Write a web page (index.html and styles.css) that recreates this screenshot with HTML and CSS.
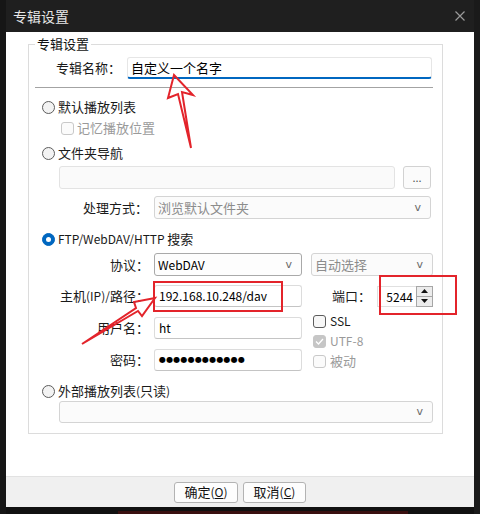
FILE: index.html
```html
<!DOCTYPE html>
<html lang="zh-CN">
<head>
<meta charset="utf-8">
<title>专辑设置</title>
<link rel="stylesheet" href="styles.css">
</head>
<body>
<div class="screen">
  <div class="side-strip"></div>
  <div class="dialog">
    <div class="titlebar">
      <span class="title">专辑设置</span>
      <svg class="close" width="10" height="10" viewBox="0 0 10 10"><path d="M0.5 0.5 L9.5 9.5 M9.5 0.5 L0.5 9.5" stroke="#9a9a9a" stroke-width="1.2" fill="none"/></svg>
    </div>
    <div class="content">
      <div class="group">
        <span class="legend">专辑设置</span>

        <div class="row name-row">
          <span class="label name-label">专辑名称：</span>
          <div class="field focused name-field">自定义一个名字</div>
        </div>

        <div class="sep"></div>

        <div class="opt opt-default">
          <span class="rb"></span><span>默认播放列表</span>
        </div>
        <div class="opt opt-remember">
          <span class="cb dis"></span><span class="muted">记忆播放位置</span>
        </div>
        <div class="opt opt-folder">
          <span class="rb"></span><span>文件夹导航</span>
        </div>

        <div class="row path-row">
          <div class="field dis path-field"></div>
          <div class="dots-btn">...</div>
        </div>

        <div class="row mode-row">
          <span class="label mode-label">处理方式：</span>
          <div class="select dis mode-select"><span>浏览默认文件夹</span><span class="chev">v</span></div>
        </div>

        <div class="opt opt-ftp">
          <span class="rb on"></span><span><span class="lat">FTP/WebDAV/HTTP </span>搜索</span>
        </div>

        <div class="row proto-row">
          <span class="label col-label">协议：</span>
          <div class="select proto-select"><span class="lat">WebDAV</span><span class="chev">v</span></div>
          <div class="select dis auto-select"><span>自动选择</span><span class="chev">v</span></div>
        </div>

        <div class="ftp">
          <div class="ftp-left">
            <div class="frow">
              <span class="label col-label">主机<span class="lat">(IP)/</span>路径：</span>
              <div class="field ftp-field"><span class="lat">192.168.10.248/dav</span></div>
            </div>
            <div class="frow">
              <span class="label col-label">用户名：</span>
              <div class="field ftp-field"><span class="lat">ht</span></div>
            </div>
            <div class="frow">
              <span class="label col-label">密码：</span>
              <div class="field ftp-field"><span class="pw">●●●●●●●●●●●●</span></div>
            </div>
          </div>
          <div class="ftp-right">
            <div class="port-row">
              <span class="label port-label">端口：</span>
              <div class="spin">
                <div class="spin-val lat">5244</div>
                <div class="spin-btns">
                  <div class="spin-btn"><svg width="7" height="4" viewBox="0 0 7 4"><path d="M3.5 0 L7 4 L0 4 Z" fill="#111"/></svg></div>
                  <div class="spin-btn"><svg width="7" height="4" viewBox="0 0 7 4"><path d="M0 0 L7 0 L3.5 4 Z" fill="#111"/></svg></div>
                </div>
              </div>
            </div>
            <div class="copt copt-first"><span class="cb"></span><span class="lat">SSL</span></div>
            <div class="copt"><span class="cb dis-on"><svg width="9" height="7" viewBox="0 0 9 7"><path d="M1 3.5 L3.5 6 L8 1" stroke="#fff" stroke-width="1.3" fill="none"/></svg></span><span class="muted lat">UTF-8</span></div>
            <div class="copt"><span class="cb dis"></span><span class="muted">被动</span></div>
          </div>
        </div>

        <div class="opt opt-ext">
          <span class="rb"></span><span>外部播放列表<span class="lat">(</span>只读<span class="lat">)</span></span>
        </div>
        <div class="row ext-row">
          <div class="select dis ext-select"><span></span><span class="chev">v</span></div>
        </div>
      </div>
    </div>
    <div class="footer">
      <div class="btn btn-ok">确定<span class="lat">(<u>O</u>)</span></div>
      <div class="btn btn-cancel">取消<span class="lat">(<u>C</u>)</span></div>
    </div>
    <div class="below"><div class="below-bar"></div></div>
  </div>
  <div class="side-strip right"></div>
</div>

<svg class="annot" width="480" height="514" viewBox="0 0 480 514">
  <rect x="154" y="282" width="128" height="29" fill="none" stroke="#e3242b" stroke-width="2"/>
  <rect x="380" y="276" width="76" height="38" fill="none" stroke="#e3242b" stroke-width="2"/>
  <polygon points="174,75 193,95 182,92 191,148 178,94 168,98" fill="none" stroke="#e3242b" stroke-width="2" stroke-linejoin="miter"/>
  <polygon points="155,298 134,302 136,308 82,344 138,311 142,316" fill="none" stroke="#e3242b" stroke-width="2" stroke-linejoin="miter"/>
</svg>
</body>
</html>
```

FILE: styles.css
```css
html, body {
  margin: 0;
  padding: 0;
}

body {
  width: 480px;
  height: 514px;
  overflow: hidden;
  position: relative;
  background: #121212;
  font-family: "Noto Sans CJK SC", "Noto Sans", sans-serif;
  font-size: 13px;
  color: #1a1a1a;
}

.lat {
  font-size: 12px;
}

.screen {
  display: flex;
  height: 514px;
}

.side-strip {
  width: 6px;
  background: #161616;
}

.side-strip.right {
  background: #1a1a1a;
}

.dialog {
  width: 468px;
  display: flex;
  flex-direction: column;
}

.titlebar {
  height: 32px;
  box-sizing: border-box;
  background: #1f1f1f;
  display: flex;
  align-items: center;
  justify-content: space-between;
  padding: 0 9px 0 7px;
  color: #e6e6e6;
  font-size: 14px;
  line-height: 18px;
}

.content {
  height: 444px;
  box-sizing: border-box;
  background: #ffffff;
  padding: 12px 0 0 22px;
}

.group {
  position: relative;
  width: 415px;
  height: 390px;
  box-sizing: border-box;
  border: 1px solid #dcdcdc;
}

.legend {
  position: absolute;
  top: -10px;
  left: 6px;
  padding: 0 2px;
  background: #fff;
  line-height: 18px;
  color: #111;
}

.row {
  display: flex;
  align-items: center;
}

.label {
  line-height: 18px;
  white-space: nowrap;
}

.field {
  height: 22px;
  box-sizing: border-box;
  border: 1px solid #dcdcdc;
  border-bottom-color: #c4c4c4;
  border-radius: 3px;
  background: #fff;
  padding: 0 4px;
  display: flex;
  align-items: center;
  line-height: 18px;
  color: #000;
  white-space: nowrap;
}

.field.focused {
  border-color: #e6e6e6;
  border-bottom: 2px solid #0067c0;
  padding-top: 1px;
  padding-left: 3px;
}

.field.dis {
  background: #fafafa;
  border-color: #e3e3e3;
}

.select {
  height: 23px;
  box-sizing: border-box;
  border: 1px solid #a9a9a9;
  border-radius: 3px;
  background: #fdfdfd;
  display: flex;
  align-items: center;
  justify-content: space-between;
  padding: 0 9px 0 3px;
  line-height: 18px;
  color: #000;
}

.select.dis {
  border-color: #d4d4d4;
  background: #fbfbfb;
  color: #8c8c8c;
}

.chev {
  font-family: "DejaVu Sans", sans-serif;
  font-size: 11px;
  color: #6a6a6a;
}

/* name row */
.name-row {
  margin-top: 12px;
  padding-left: 27px;
}

.name-label {
  width: 71px;
}

.name-field {
  width: 305px;
}

.sep {
  margin: 8px 0 0 6px;
  width: 398px;
  height: 1px;
  background: #a3a3a3;
}

/* option rows (radio/checkbox) */
.opt {
  display: flex;
  align-items: center;
  gap: 3px;
  height: 20px;
  line-height: 18px;
  padding-left: 13px;
}

.opt-default { margin-top: 9px; }
.opt-remember { margin-top: 1px; padding-left: 32px; gap: 3px; }
.opt-folder { margin-top: 5px; }
.opt-ftp { margin-top: 10px; }
.opt-ext { margin-top: 10px; }

.rb {
  width: 13px;
  height: 13px;
  box-sizing: border-box;
  border: 1px solid #5c5c5c;
  border-radius: 50%;
  background: #f3f3f3;
  position: relative;
  flex: none;
}

.rb.on {
  background: #0067c0;
  border-color: #0067c0;
}

.rb.on::after {
  content: "";
  position: absolute;
  left: 3px;
  top: 3px;
  width: 5px;
  height: 5px;
  border-radius: 50%;
  background: #fff;
}

.cb {
  width: 13px;
  height: 13px;
  box-sizing: border-box;
  border: 1px solid #5c5c5c;
  border-radius: 3px;
  background: #f7f7f7;
  flex: none;
  display: flex;
  align-items: center;
  justify-content: center;
}

.cb.dis {
  border-color: #c9c9c9;
  background: #fbfbfb;
}

.cb.dis-on {
  border-color: #c6c6c6;
  background: #c6c6c6;
}

.muted {
  color: #9a9a9a;
}

/* path row */
.path-row {
  margin-top: 3px;
  padding-left: 30px;
  gap: 8px;
}

.path-field {
  width: 336px;
  height: 23px;
}

.dots-btn {
  width: 28px;
  height: 23px;
  box-sizing: border-box;
  border: 1px solid #d2d2d2;
  border-radius: 3px;
  background: #fbfbfb;
  color: #555;
  font-size: 11px;
  line-height: 20px;
  text-align: center;
}

/* mode row */
.mode-row {
  margin-top: 7px;
  padding-left: 54px;
}

.mode-label {
  width: 71px;
}

.mode-select {
  width: 277px;
}

/* protocol row */
.col-label {
  width: 125px;
  box-sizing: border-box;
  text-align: right;
  padding-right: 5px;
}

.proto-row {
  margin-top: 4px;
}

.proto-select {
  width: 148px;
  height: 23px;
}

.auto-select {
  width: 122px;
  height: 23px;
  margin-left: 9px;
}

/* ftp area */
.ftp {
  display: flex;
  margin-top: 9px;
}

.ftp-left {
  display: flex;
  flex-direction: column;
  gap: 10px;
}

.frow {
  display: flex;
  align-items: center;
}

.ftp-field {
  width: 148px;
}

.pw {
  font-family: "DejaVu Sans", sans-serif;
  font-size: 8px;
  letter-spacing: 0.2px;
  color: #000;
}

.ftp-right {
  margin-left: 9px;
  display: flex;
  flex-direction: column;
}

.port-row {
  display: flex;
  align-items: center;
  height: 22px;
  padding-left: 21px;
}

.port-label {
  width: 45px;
}

.spin {
  display: flex;
  width: 56px;
  height: 21px;
}

.spin-val {
  width: 39px;
  box-sizing: border-box;
  border: 1px solid #e0e0e0;
  border-right: none;
  text-align: right;
  padding-right: 3px;
  line-height: 19px;
  color: #000;
}

.spin-btns {
  width: 17px;
  display: flex;
  flex-direction: column;
}

.spin-btn {
  flex: 1;
  box-sizing: border-box;
  border: 1px solid #a6a6a6;
  background: #ececec;
  display: flex;
  align-items: center;
  justify-content: center;
}

.spin-btn + .spin-btn {
  border-top: none;
}

.copt {
  display: flex;
  align-items: center;
  gap: 4px;
  height: 20px;
  line-height: 18px;
  padding-left: 2px;
}

.copt-first {
  margin-top: 4px;
}

/* ext row */
.ext-row {
  padding-left: 30px;
}

.ext-select {
  width: 374px;
  height: 22px;
}

/* footer */
.footer {
  height: 31px;
  box-sizing: border-box;
  background: #f0f0f0;
  border-top: 1px solid #e2e2e2;
  display: flex;
  justify-content: center;
  gap: 5px;
  padding-top: 5px;
}

.btn {
  height: 21px;
  box-sizing: border-box;
  border: 1px solid #b3b3b3;
  border-radius: 3px;
  background: #fdfdfd;
  line-height: 18px;
  text-align: center;
  color: #111;
}

.btn-ok { width: 64px; }
.btn-cancel { width: 63px; }

.below {
  flex: 1;
  background: #111111;
  position: relative;
}

.below-bar {
  margin: 4px 0 0 112px;
  width: 290px;
  height: 3px;
  background: #3a1010;
}

.annot {
  position: absolute;
  left: 0;
  top: 0;
  pointer-events: none;
}
```
